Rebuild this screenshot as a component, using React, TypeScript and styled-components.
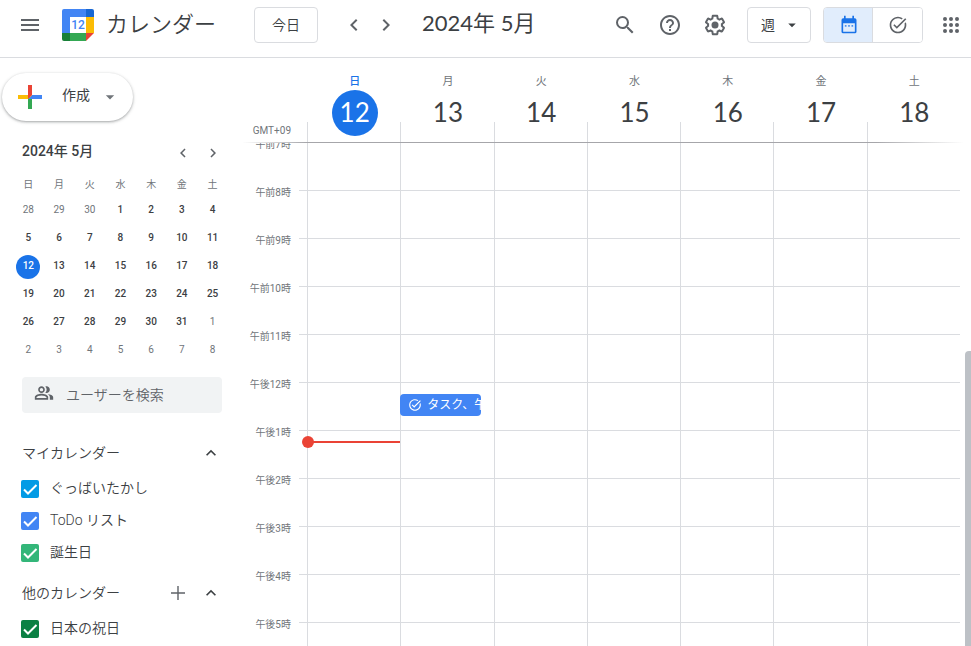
import React from "react";
import styled, { createGlobalStyle, css } from "styled-components";
import {
  MdArrowDropDown,
  MdChevronLeft,
  MdChevronRight,
  MdExpandLess,
  MdHelpOutline,
  MdMenu,
  MdOutlinePeopleAlt,
  MdSearch,
  MdTaskAlt,
} from "react-icons/md";

const ui = `Roboto, "Noto Sans CJK JP", sans-serif`;
const display = `Lato, "Noto Sans CJK JP", sans-serif`;
const ink = "#3c4043";
const muted = "#70757a";
const iconGray = "#5f6368";
const line = "#dadce0";
const blue = "#1a73e8";

const GlobalStyle = createGlobalStyle`
  *, *::before, *::after { box-sizing: border-box; }
  body { margin: 0; background: #fff; color: ${ink}; font-family: ${ui}; font-size: 14px; overflow: hidden; }
  button, input, select { font: inherit; color: inherit; }
  button { border: 0; background: none; padding: 0; cursor: pointer; }
  svg { display: block; flex: none; }
  h1, h2, h3 { margin: 0; font-weight: 400; }
`;

const Page = styled.div`
  display: flex;
  flex-direction: column;
  height: 100vh;
`;

/* Top bar */
const TopBar = styled.header`
  display: flex;
  align-items: center;
  flex: none;
  height: 58px;
  padding: 0 8px 8px 18px;
  border-bottom: 1px solid ${line};
`;

const IconButton = styled.button<{ $size?: number }>`
  display: grid;
  place-items: center;
  flex: none;
  width: ${(p) => p.$size ?? 24}px;
  height: ${(p) => p.$size ?? 24}px;
  color: ${iconGray};
`;

const Brand = styled.div`
  display: flex;
  align-items: center;
  gap: 12px;
  width: 192px;
  margin-left: 20px;
`;

const BrandName = styled.h1`
  padding-bottom: 2px;
  font-family: ${display};
  font-size: 22px;
  font-weight: 350;
  line-height: 32px;
  white-space: nowrap;
`;

const TodayButton = styled.button`
  flex: none;
  width: 64px;
  height: 36px;
  padding-bottom: 2px;
  border: 1px solid ${line};
  border-radius: 4px;
  font-weight: 350;
`;

const Arrows = styled.div`
  display: flex;
  gap: 8px;
  margin-left: 24px;
`;

const Period = styled.h2`
  margin-left: 24px;
  padding-bottom: 4px;
  font-family: ${display};
  font-size: 22px;
  line-height: 32px;
  white-space: nowrap;
`;

const Tools = styled.div`
  display: flex;
  align-items: center;
  margin-left: auto;
`;

const ToolIcons = styled.div`
  display: flex;
  gap: 21px;
  margin-right: 20px;
`;

const ViewPicker = styled.label`
  display: grid;
  grid-template-columns: 1fr 27px;
  align-items: center;
  width: 64px;
  height: 36px;
  margin-right: 12px;
  border: 1px solid ${line};
  border-radius: 4px;

  svg { grid-area: 1 / 2; pointer-events: none; }
`;

const ViewSelect = styled.select`
  grid-area: 1 / 1 / 2 / 3;
  height: 100%;
  padding: 0 0 0 13px;
  border: 0;
  background: none;
  appearance: none;
`;

const ModeSwitch = styled.div`
  display: flex;
  width: 100px;
  height: 36px;
  margin-right: 16px;
  border: 1px solid ${line};
  border-radius: 4px;
  overflow: hidden;
`;

const ModeButton = styled.button<{ $active?: boolean }>`
  display: grid;
  place-items: center;
  flex: 1 1 0;
  min-width: 0;
  color: ${(p) => (p.$active ? blue : iconGray)};
  background: ${(p) => (p.$active ? "#e1edfc" : "#fff")};
  box-shadow: ${(p) => (p.$active ? `inset -1px 0 ${line}` : "none")};
`;

/* Body */
const Body = styled.div`
  display: flex;
  flex: 1;
  min-height: 0;
`;

const Sidebar = styled.aside`
  flex: none;
  width: 243px;
  padding-top: 15px;
  overflow: hidden;
`;

const CreateButton = styled.button`
  display: flex;
  align-items: center;
  height: 48px;
  margin-left: 2px;
  padding: 0 13px 0 10px;
  border-radius: 24px;
  background: #fff;
  box-shadow: 0 1px 2px rgba(60, 64, 67, 0.3), 0 1px 3px 1px rgba(60, 64, 67, 0.15);
`;

const CreateText = styled.span`
  margin: 0 10px 4px 14px;
  line-height: 20px;
`;

const SideHead = styled.div`
  display: flex;
  align-items: center;
  height: 32px;
  padding: 0 20px 0 22px;
`;

const MiniHead = styled(SideHead)`
  margin-top: 16px;
`;

const MiniTitle = styled.h2`
  flex: 1;
  padding-bottom: 4px;
  font-size: 14px;
  line-height: 20px;
  font-weight: 500;
`;

const MiniTable = styled.table`
  width: 215px;
  margin: 2px 0 0 13px;
  border-collapse: collapse;
  table-layout: fixed;
  font-size: 10px;
  text-align: center;
`;

const MiniWeekday = styled.th`
  height: 26px;
  padding: 0 0 2px;
  color: ${muted};
  font-weight: 400;
`;

const MiniCell = styled.td`
  height: 28px;
  padding: 0;
`;

const MiniDay = styled.button<{ $tone: "in" | "out" | "today" }>`
  width: 24px;
  height: 24px;
  padding-bottom: 2px;
  border-radius: 50%;
  line-height: 22px;
  font-weight: 500;
  ${(p) => p.$tone === "out" && css`color: ${muted}; font-weight: 400;`}
  ${(p) => p.$tone === "today" && css`color: #fff; background: ${blue};`}
`;

const PeopleSearch = styled.label`
  display: flex;
  align-items: center;
  gap: 12px;
  height: 36px;
  margin: 12px 21px 0 22px;
  padding: 0 12px;
  border-radius: 4px;
  background: #f1f3f4;
  color: ${iconGray};

  svg { margin-bottom: 4px; }
`;

const PeopleInput = styled.input`
  flex: 1;
  min-width: 0;
  padding: 0;
  border: 0;
  outline: 0;
  background: none;
  font-weight: 350;

  &::placeholder { color: ${iconGray}; opacity: 1; }
`;

const CalendarGroup = styled.section<{ $gap: number }>`
  margin-top: ${(p) => p.$gap}px;
`;

const GroupTitle = styled.h3`
  flex: 1;
  font-size: 14px;
  font-weight: 350;
  line-height: 20px;
`;

const GroupActions = styled.div`
  display: flex;
  gap: 9px;
`;

const MonthArrows = styled(GroupActions)`
  gap: 10px;
`;

const CalendarRow = styled.label`
  display: flex;
  align-items: center;
  gap: 11px;
  height: 32px;
  padding-left: 21px;
`;

const CalendarName = styled.span`
  padding-bottom: 2px;
  font-weight: 350;
  line-height: 20px;
`;

const CalendarList = styled.div`
  padding-top: 4px;
`;

const CheckWrap = styled.span`
  display: grid;
  place-items: center;
  width: 18px;
  height: 18px;

  > * { grid-area: 1 / 1; }
  svg { color: #fff; pointer-events: none; }
`;

const CheckInput = styled.input<{ $color: string }>`
  width: 18px;
  height: 18px;
  margin: 0;
  border-radius: 2px;
  appearance: none;
  background: ${(p) => p.$color};
`;

/* Week view */
const Week = styled.main`
  display: flex;
  flex-direction: column;
  flex: 1;
  min-width: 0;
`;

const WeekHead = styled.div`
  display: flex;
  flex: none;
  height: 85px;
  padding-right: 11px;
  border-bottom: 1px solid;
  border-image: linear-gradient(to right, transparent, #a6a6aa 64px, #a6a6aa calc(100% - 96px), transparent calc(100% - 8px)) 1;
`;

const ZoneLabel = styled.div`
  align-self: flex-end;
  width: 48px;
  margin-right: 16px;
  padding-bottom: 3px;
  color: ${muted};
  font-size: 10px;
  line-height: 16px;
  text-align: right;
`;

const Days = styled.div`
  display: grid;
  grid-template-columns: repeat(7, 1fr);
  flex: 1;
`;

const DayHead = styled.div<{ $today: boolean }>`
  display: flex;
  flex-direction: column;
  align-items: center;
  padding: 16px 0 0 2px;
  background: linear-gradient(${line}, ${line}) left bottom / 1px 20px no-repeat;
  color: ${(p) => (p.$today ? blue : muted)};
  font-size: 11px;
  font-weight: ${(p) => (p.$today ? 500 : 400)};
  line-height: 16px;
`;

const DayNumber = styled.span<{ $today: boolean }>`
  width: 46px;
  height: 46px;
  border-radius: 50%;
  font-family: ${display};
  font-size: 26px;
  font-weight: 400;
  line-height: 44px;
  text-align: center;
  color: ${(p) => (p.$today ? "#fff" : ink)};
  background: ${(p) => (p.$today ? blue : "transparent")};
`;

const WeekBody = styled.div`
  display: flex;
  flex: 1;
  min-height: 0;
  overflow: hidden;
`;

const HourLabels = styled.div`
  width: 48px;
  margin-right: 8px;
`;

const HourLabel = styled.div`
  display: flow-root;
  height: 48px;
  color: ${muted};
  font-size: 10px;
  text-align: right;
  white-space: nowrap;

  span { display: block; margin-top: -6px; line-height: 16px; }
`;

const Ticks = styled.div`
  width: 8px;
`;

const HourCell = styled.div`
  height: 48px;
  border-bottom: 1px solid ${line};
`;

const DayColumn = styled.div`
  position: relative;
  border-left: 1px solid ${line};
`;

const TaskChip = styled.button`
  position: absolute;
  top: 251px;
  left: -1px;
  right: 13px;
  display: flex;
  align-items: center;
  gap: 5px;
  height: 22px;
  padding-left: 8px;
  border-radius: 4px;
  background: #4285f4;
  color: #fff;
  font-size: 12px;
  line-height: 16px;
  white-space: nowrap;
  overflow: hidden;
`;

const NowLine = styled.div`
  position: absolute;
  z-index: 1;
  top: 298px;
  left: -1px;
  right: 0;
  height: 2px;
  background: #ea4335;

  &::before {
    content: "";
    position: absolute;
    top: -5px;
    left: -5px;
    width: 12px;
    height: 12px;
    border-radius: 50%;
    background: #ea4335;
  }
`;

const ScrollTrack = styled.div`
  flex: none;
  width: 11px;
  padding: 208px 0 0 5px;
`;

const ScrollThumb = styled.div`
  height: 100%;
  border-radius: 4px 0 0 0;
  background: #bdc1c6;
`;

const Logo = () => (
  <svg width="32" height="32" viewBox="0 0 32 32" aria-hidden="true">
    <path d="M2 0h22v8H8v16H0V2a2 2 0 0 1 2-2z" fill="#4285f4" />
    <path d="M24 0h6a2 2 0 0 1 2 2v6h-8z" fill="#1967d2" />
    <path d="M24 8h8v16h-8z" fill="#fbbc04" />
    <path d="M8 24h16v8H8z" fill="#34a853" />
    <path d="M0 24h8v8H2a2 2 0 0 1-2-2z" fill="#188038" />
    <path d="M24 24h8l-8 8z" fill="#ea4335" />
    <path d="M8 8h16v16H8z" fill="#fff" />
    <text x="16" y="20" textAnchor="middle" fontFamily="Roboto, sans-serif" fontSize="12" fontWeight="500" fill="#4285f4">12</text>
  </svg>
);

const GearIcon = () => (
  <svg width="24" height="24" viewBox="0 0 24 24" fill="currentColor" aria-hidden="true">
    <path d="M13.85 22.25h-3.7c-.74 0-1.36-.54-1.45-1.27l-.27-1.89c-.27-.14-.53-.29-.79-.46l-1.8.72c-.7.26-1.47-.03-1.81-.65L2.2 15.53c-.35-.66-.2-1.44.36-1.88l1.53-1.19c-.01-.15-.02-.3-.02-.46 0-.15.01-.31.02-.46l-1.52-1.19c-.59-.45-.74-1.26-.37-1.88l1.85-3.19c.34-.62 1.11-.9 1.79-.63l1.81.73c.26-.17.52-.32.78-.46l.27-1.91c.09-.7.71-1.25 1.44-1.25h3.7c.74 0 1.36.54 1.45 1.27l.27 1.89c.27.14.53.29.79.46l1.8-.72c.71-.26 1.48.03 1.82.65l1.84 3.18c.36.66.2 1.44-.36 1.88l-1.52 1.19c.01.15.02.3.02.46s-.01.31-.02.46l1.52 1.19c.56.45.72 1.23.37 1.86l-1.86 3.22c-.34.62-1.11.9-1.8.63l-1.8-.72c-.26.17-.52.32-.78.46l-.27 1.91c-.1.68-.72 1.22-1.46 1.22zm-3.23-2h2.76l.37-2.55.53-.22c.44-.18.88-.44 1.34-.78l.45-.34 2.38.96 1.38-2.4-2.03-1.58.07-.56c.03-.26.06-.51.06-.78s-.03-.53-.06-.78l-.07-.56 2.03-1.58-1.39-2.4-2.39.96-.45-.35c-.42-.32-.87-.58-1.33-.77l-.52-.22-.37-2.55h-2.76l-.37 2.55-.53.21c-.44.19-.88.44-1.34.79l-.45.33-2.38-.95-1.39 2.39 2.03 1.58-.07.56a7 7 0 0 0-.06.79c0 .26.02.53.06.78l.07.56-2.03 1.58 1.38 2.4 2.39-.96.45.35c.43.33.86.58 1.33.77l.53.22.38 2.55z" />
    <circle cx="12" cy="12" r="3.5" />
  </svg>
);

const AppsIcon = () => (
  <svg width="24" height="24" viewBox="0 0 24 24" fill="currentColor" aria-hidden="true">
    {[6, 12, 18].map((y) => [6, 12, 18].map((x) => <circle key={`${x}-${y}`} cx={x} cy={y} r="2" />))}
  </svg>
);

const CalendarIcon = () => (
  <svg width="20" height="20" viewBox="0 0 24 24" fill="currentColor" aria-hidden="true">
    <path d="M19 4h-1V1h-2v3H8V1H6v3H5a2 2 0 0 0-2 2v14a2 2 0 0 0 2 2h14a2 2 0 0 0 2-2V6a2 2 0 0 0-2-2zm0 16H5V10h14z" />
    <path d="M7 12h2v2H7zM11 12h2v2h-2zM15 12h2v2h-2z" opacity=".75" />
  </svg>
);

const CheckIcon = () => (
  <svg width="18" height="18" viewBox="0 0 18 18" fill="none" stroke="currentColor" strokeWidth="2" aria-hidden="true">
    <path d="M3 9.5l4 4 8.5-8.5" />
  </svg>
);

const ThinPlus = () => (
  <svg width="24" height="24" viewBox="0 0 24 24" fill="none" stroke="currentColor" strokeWidth="1.4" aria-hidden="true">
    <path d="M12 5v14M5 12h14" />
  </svg>
);

const PlusLogo = () => (
  <svg width="36" height="36" viewBox="0 0 36 36" aria-hidden="true">
    <path fill="#34a853" d="M16 16v14h4V20z" />
    <path fill="#4285f4" d="M30 16H20l-4 4h14z" />
    <path fill="#fbbc05" d="M6 16v4h10l4-4z" />
    <path fill="#ea4335" d="M20 16V6h-4v14z" />
  </svg>
);

const weekdays = ["日", "月", "火", "水", "木", "金", "土"];
const TODAY = 12;
const hours = [
  "午前7時", "午前8時", "午前9時", "午前10時", "午前11時", "午後12時",
  "午後1時", "午後2時", "午後3時", "午後4時", "午後5時",
];

/* Six weeks starting on April 28 */
const weeks = Array.from({ length: 6 }, (_, w) =>
  Array.from({ length: 7 }, (_, d) => {
    const n = w * 7 + d - 2;
    if (n < 1) return { day: n + 30, current: false };
    if (n > 31) return { day: n - 31, current: false };
    return { day: n, current: true };
  })
);

const myCalendars = [
  { name: "ぐっばいたかし", color: "#039be5" },
  { name: "ToDo リスト", color: "#4285f4" },
  { name: "誕生日", color: "#33b679" },
];
const otherCalendars = [{ name: "日本の祝日", color: "#0b8043" }];

const CalendarItem = ({ name, color }: { name: string; color: string }) => (
  <CalendarRow>
    <CheckWrap>
      <CheckInput type="checkbox" defaultChecked $color={color} />
      <CheckIcon />
    </CheckWrap>
    <CalendarName>{name}</CalendarName>
  </CalendarRow>
);

export default function App() {
  return (
    <Page>
      <GlobalStyle />
      <TopBar>
        <IconButton aria-label="メインメニュー"><MdMenu size={24} /></IconButton>
        <Brand>
          <Logo />
          <BrandName>カレンダー</BrandName>
        </Brand>
        <TodayButton>今日</TodayButton>
        <Arrows>
          <IconButton aria-label="前の週"><MdChevronLeft size={24} /></IconButton>
          <IconButton aria-label="次の週"><MdChevronRight size={24} /></IconButton>
        </Arrows>
        <Period>2024年 5月</Period>
        <Tools>
          <ToolIcons>
            <IconButton aria-label="検索"><MdSearch size={24} /></IconButton>
            <IconButton aria-label="サポート"><MdHelpOutline size={24} /></IconButton>
            <IconButton aria-label="設定"><GearIcon /></IconButton>
          </ToolIcons>
          <ViewPicker>
            <ViewSelect aria-label="表示" defaultValue="week">
              <option value="week">週</option>
            </ViewSelect>
            <MdArrowDropDown size={18} />
          </ViewPicker>
          <ModeSwitch>
            <ModeButton $active aria-label="カレンダー"><CalendarIcon /></ModeButton>
            <ModeButton aria-label="ToDo リスト"><MdTaskAlt size={20} /></ModeButton>
          </ModeSwitch>
          <IconButton aria-label="アプリ"><AppsIcon /></IconButton>
        </Tools>
      </TopBar>

      <Body>
        <Sidebar>
          <CreateButton>
            <PlusLogo />
            <CreateText>作成</CreateText>
            <MdArrowDropDown size={20} color={muted} />
          </CreateButton>

          <MiniHead>
            <MiniTitle>2024年 5月</MiniTitle>
            <MonthArrows>
              <IconButton $size={20} aria-label="前の月"><MdChevronLeft size={18} /></IconButton>
              <IconButton $size={20} aria-label="次の月"><MdChevronRight size={18} /></IconButton>
            </MonthArrows>
          </MiniHead>
          <MiniTable>
            <thead>
              <tr>{weekdays.map((d) => <MiniWeekday key={d} scope="col">{d}</MiniWeekday>)}</tr>
            </thead>
            <tbody>
              {weeks.map((week, i) => (
                <tr key={i}>
                  {week.map(({ day, current }) => (
                    <MiniCell key={day}>
                      <MiniDay $tone={!current ? "out" : day === TODAY ? "today" : "in"}>{day}</MiniDay>
                    </MiniCell>
                  ))}
                </tr>
              ))}
            </tbody>
          </MiniTable>

          <PeopleSearch>
            <MdOutlinePeopleAlt size={20} />
            <PeopleInput type="text" aria-label="ユーザーを検索" placeholder="ユーザーを検索" />
          </PeopleSearch>

          <CalendarGroup $gap={24}>
            <SideHead>
              <GroupTitle>マイカレンダー</GroupTitle>
              <IconButton aria-label="マイカレンダーを閉じる"><MdExpandLess size={20} color={ink} /></IconButton>
            </SideHead>
            <CalendarList>
              {myCalendars.map((c) => <CalendarItem key={c.name} {...c} />)}
            </CalendarList>
          </CalendarGroup>
          <CalendarGroup $gap={8}>
            <SideHead>
              <GroupTitle>他のカレンダー</GroupTitle>
              <GroupActions>
                <IconButton aria-label="カレンダーを追加"><ThinPlus /></IconButton>
                <IconButton aria-label="他のカレンダーを閉じる"><MdExpandLess size={20} color={ink} /></IconButton>
              </GroupActions>
            </SideHead>
            <CalendarList>
              {otherCalendars.map((c) => <CalendarItem key={c.name} {...c} />)}
            </CalendarList>
          </CalendarGroup>
        </Sidebar>

        <Week>
          <WeekHead>
            <ZoneLabel>GMT+09</ZoneLabel>
            <Days>
              {weekdays.map((d, i) => (
                <DayHead key={d} $today={i === 0}>
                  {d}
                  <DayNumber $today={i === 0}>{TODAY + i}</DayNumber>
                </DayHead>
              ))}
            </Days>
          </WeekHead>
          <WeekBody>
            <HourLabels>
              {hours.map((h) => <HourLabel key={h}><span>{h}</span></HourLabel>)}
            </HourLabels>
            <Ticks>{hours.map((h) => <HourCell key={h} />)}</Ticks>
            <Days>
              {weekdays.map((d, i) => (
                <DayColumn key={d}>
                  {hours.map((h) => <HourCell key={h} />)}
                  {i === 0 && <NowLine />}
                  {i === 1 && (
                    <TaskChip><MdTaskAlt size={14} />タスク、午後12:15</TaskChip>
                  )}
                </DayColumn>
              ))}
            </Days>
            <ScrollTrack><ScrollThumb /></ScrollTrack>
          </WeekBody>
        </Week>
      </Body>
    </Page>
  );
}
